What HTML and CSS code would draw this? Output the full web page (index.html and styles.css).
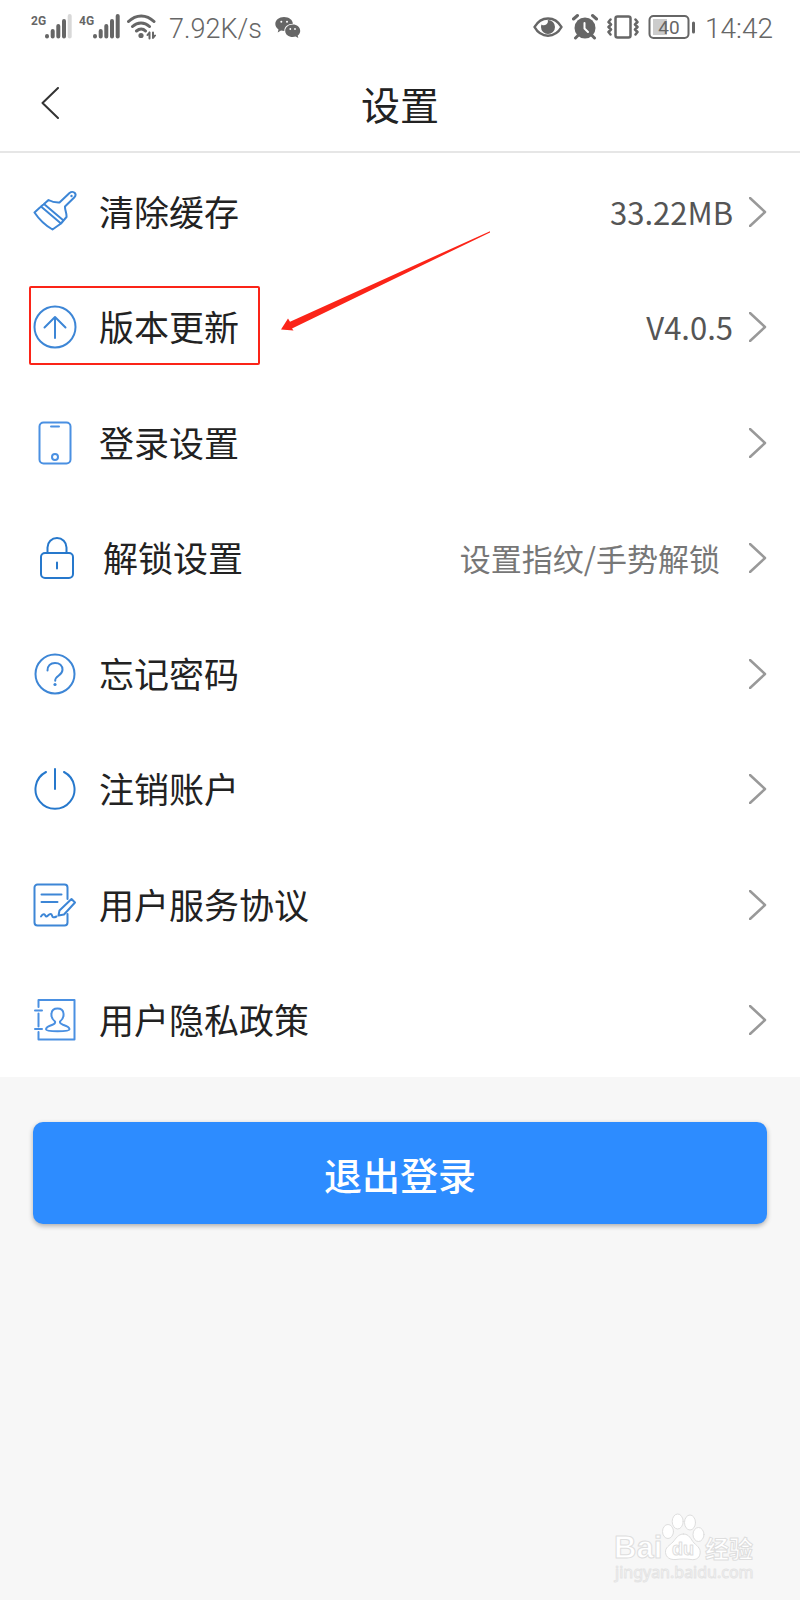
FILE: index.html
```html
<!DOCTYPE html>
<html lang="zh-CN">
<head>
<meta charset="utf-8">
<meta name="viewport" content="width=device-width, initial-scale=1">
<title>设置</title>
<link rel="stylesheet" href="styles.css">
</head>
<body>
<svg class="defs" aria-hidden="true">
  <symbol id="bars" viewBox="0 0 27 28">
    <path d="M2 23v.4M7.7 18v5.4M13.3 13v10.4M19 8v15.4" />
  </symbol>
  <symbol id="chevron" viewBox="0 0 18 30">
    <path d="M1 1l15 14L1 29" />
  </symbol>
</svg>

<div class="status">
  <div class="status-group">
    <svg class="signal" viewBox="0 0 41 28"><text x="0" y="12">2G</text><use href="#bars" x="14" width="27" height="28"/><path class="faint" d="M38.7 3v20.4"/></svg>
    <svg class="signal" viewBox="0 0 41 28"><text x="0" y="12">4G</text><use href="#bars" x="14" width="27" height="28"/><path d="M38.7 3v20.4"/></svg>
    <svg class="wifi" viewBox="0 0 29 28">
      <path d="M1.500 8.500C9 1 19.500 1 27 8.500M5.500 13.500c5-4.700 12-4.700 17 0M9.500 18c3-2.600 6.500-2.600 9 0"/>
      <circle cx="14" cy="22.500" r="2.600"/>
      <path class="thin" d="M22.500 19.500v6M20.500 22l2-2.500M26 19.500v5.500l2-2.500"/>
    </svg>
    <span class="speed">7.92K/s</span>
    <svg class="wechat" viewBox="0 0 26 28">
      <path d="M9 4c5 0 8.600 2.800 8.900 6.700-5 0-8.700 2.900-8.600 7.300-1.300 0-2.300-.1-3.300-.4l-3.300 2 .8-3.200C1.500 15 .3 13.100.3 11 .3 7 4 4 9 4z"/>
      <path d="M17.800 11.600c4.200 0 7.400 2.700 7.400 6.300 0 1.900-1 3.500-2.500 4.600l.6 2.500-2.700-1.500c-.9.300-1.800.4-2.800.4-4.200 0-7.600-2.600-7.600-6s3.400-6.300 7.600-6.300z"/>
      <g class="holes"><circle cx="6.300" cy="8.700" r="1"/><circle cx="12" cy="8.700" r="1"/><circle cx="15.300" cy="16" r=".9"/><circle cx="20" cy="16" r=".9"/></g>
    </svg>
  </div>
  <div class="status-group right">
    <svg class="eye" viewBox="0 0 30 28">
      <path class="line" d="M1.500 14C8 2.500 22 2.500 28.500 14 22 25.500 8 25.500 1.500 14z"/>
      <path d="M15 7a7 7 0 1 1-7 7c0-1 .2-1.800.5-2.500a4 4 0 0 0 6.200-4.400z"/>
    </svg>
    <svg class="alarm" viewBox="0 0 26 28">
      <circle cx="13" cy="15" r="10.500"/>
      <path class="line" d="M1.500 6l4-3.500M24.500 6l-4-3.500M6 22.500l-2.500 2.500M20 22.500l2.500 2.500"/>
      <path class="hand" d="M12.500 10v5.500l3.500 3.500"/>
    </svg>
    <svg class="vibrate" viewBox="0 0 32 28">
      <rect x="8.500" y="3.500" width="15" height="21" rx="2"/>
      <path d="M3.500 6.500L1.500 9l2.500 2.500L1.500 14 4 16.500 1.500 19l2 2.500M28.500 6.500l2 2.500-2.500 2.500 2.500 2.500-2.500 2.500 2.500 2.500-2 2.500"/>
    </svg>
    <svg class="battery" viewBox="0 0 48 28">
      <rect class="charge" x="5" y="6" width="14" height="16"/>
      <rect class="shell" x="1.500" y="3" width="39" height="22" rx="4"/>
      <path class="cap" d="M45.500 10v9"/>
      <text x="21" y="21">40</text>
    </svg>
    <time class="clock">14:42</time>
  </div>
</div>

<header class="header">
  <button class="back" aria-label="返回"><svg viewBox="0 0 18 32"><path d="M17 1L1.500 16 17 31"/></svg></button>
  <h1>设置</h1>
</header>

<main>
  <nav class="list">
    <a class="row" href="#">
      <svg class="icon" viewBox="0 0 44 44"><path d="M1.500 22.500l6.500-6L28 33.500l-8.500 6c-7-4-13-9.500-18-17zM8 16.500l3-2.500L30.500 30.500 28 33.500M11 14l4.500-4c3 1.700 7 2.700 11 2.500L36.500 3c1.800-1.500 4.200-1.300 5.300 0s.9 3-.6 4.500L32 16.500c-.2 4 2 7 1.500 10.500l-3 3.500"/><circle class="dot" cx="38.500" cy="6" r="1.200"/></svg>
      <span class="label">清除缓存</span><span class="value">33.22MB</span>
      <svg class="chevron"><use href="#chevron"/></svg>
    </a>
    <a class="row marked" href="#">
      <svg class="icon" viewBox="0 0 44 44"><circle cx="22" cy="22" r="20.500"/><path d="M22 33V12.500M11.500 22.500L22 12l10.500 10.500"/></svg>
      <span class="label">版本更新</span><span class="value">V4.0.5</span>
      <svg class="chevron"><use href="#chevron"/></svg>
      <span class="frame"></span>
      <svg class="arrow" viewBox="0 0 210 100"><path d="M0 98.500l7-11 2 3.200L209 .2v1.200L11 97.500l1.500 2z"/></svg>
    </a>
    <a class="row" href="#">
      <svg class="icon light" viewBox="0 0 44 44"><rect x="6.500" y="1.500" width="31" height="41" rx="4"/><path d="M18 5.500h8"/><circle cx="22" cy="36" r="3"/></svg>
      <span class="label">登录设置</span>
      <svg class="chevron"><use href="#chevron"/></svg>
    </a>
    <a class="row lock" href="#">
      <svg class="icon deep" viewBox="0 0 44 44"><rect x="6" y="17" width="32" height="25" rx="4"/><path d="M12.500 17v-5.500a9.500 9.500 0 0 1 19 0V17M22 26.500v6"/></svg>
      <span class="label">解锁设置</span><span class="value hint">设置指纹/手势解锁</span>
      <svg class="chevron"><use href="#chevron"/></svg>
    </a>
    <a class="row" href="#">
      <svg class="icon" viewBox="0 0 44 44"><circle cx="22" cy="22" r="19.500"/><path d="M14.500 18.500c0-4.500 3-7.500 7.500-7.500s7.500 2.700 7.500 6.800c0 3-1.700 4.400-4 6-2.200 1.500-3.300 2.500-3.300 5"/><circle class="dot" cx="22" cy="32.500" r="1.600"/></svg>
      <span class="label">忘记密码</span>
      <svg class="chevron"><use href="#chevron"/></svg>
    </a>
    <a class="row" href="#">
      <svg class="icon deep" viewBox="0 0 44 44"><path d="M13 5A19.500 19.500 0 1 0 31 5M22 2v20"/></svg>
      <span class="label">注销账户</span>
      <svg class="chevron"><use href="#chevron"/></svg>
    </a>
    <a class="row" href="#">
      <svg class="icon" viewBox="0 0 44 44"><path d="M34.500 16V4.500a3 3 0 0 0-3-3h-27a3 3 0 0 0-3 3v35a3 3 0 0 0 3 3h27a3 3 0 0 0 3-3V31M8.500 11.500h20M8.500 19h16M8 33.500c1.500-2 3-3 4-1.500s1 2.500 3 .5 3.500-2 4 0 1.500 2.500 4.500 1M26.500 27.500L38.500 16l3.500 3.500L31 31.500l-5.500 1z"/></svg>
      <span class="label">用户服务协议</span>
      <svg class="chevron"><use href="#chevron"/></svg>
    </a>
    <a class="row" href="#">
      <svg class="icon light" viewBox="0 0 44 44"><path d="M5.500 9V2h36v39.500h-36V34M5.500 15.500v13M2 12.500h7M2 31h7M22 23.500c-3-2.300-4-4.500-3.500-8 .3-3 2.500-5 6-5s5.700 2 6 5c.4 3.500-.5 5.700-3.500 8-.4 1.500.5 2.300 3 3.200 4 1.300 6.500 2.500 6.500 4.500 0 1.400-5 2-12 2s-11.500-.6-11.500-2c0-2 2.500-3.200 6.500-4.500 2.300-.8 3-1.700 2.500-3.200z"/></svg>
      <span class="label">用户隐私政策</span>
      <svg class="chevron"><use href="#chevron"/></svg>
    </a>
  </nav>
  <div class="actions"><button class="logout">退出登录</button></div>
</main>

<svg class="watermark" viewBox="0 0 150 75" role="img" aria-label="Baidu 经验">
  <g class="mark">
    <ellipse cx="58" cy="21.500" rx="5.500" ry="7"/><ellipse cx="67.700" cy="11.500" rx="5.500" ry="7.500"/><ellipse cx="80" cy="12.500" rx="5.500" ry="7.500"/><ellipse cx="88.500" cy="24.500" rx="5.500" ry="7"/>
    <path d="M73.500 24c6 0 7 5 10.500 9 4 3.500 7 6 6 11-1 5-5 6-9 5.500-5-.7-10-.7-15 0-6 .5-10-2-10.500-7s4-7 7.500-10.500c3-3.500 5-8 10.500-8z"/>
    <text class="bai" x="4" y="48">Bai</text>
    <text class="du" x="62" y="45">du</text>
    <text class="exp" x="95" y="48">经验</text>
    <text class="url" x="5" y="68">jingyan.baidu.com</text>
  </g>
</svg>
</body>
</html>
```
FILE: styles.css
```css
* {
  box-sizing: border-box;
}

body {
  position: relative;
  min-height: 100vh;
  margin: 0;
  background: #f7f7f7;
  color: #222;
  font-family: "Noto Sans CJK SC", sans-serif;
}

svg {
  flex: none;
  fill: none;
  stroke-linecap: round;
  stroke-linejoin: round;
}

.defs {
  position: absolute;
  width: 0;
  height: 0;
}

/* Status bar */
.status {
  display: flex;
  justify-content: space-between;
  align-items: center;
  height: 54px;
  padding: 0 27px 0 31px;
  background: #fff;
  color: #666;
  font-family: Roboto, sans-serif;
}

.status-group {
  display: flex;
  align-items: center;
  gap: 7px;
}

.status-group.right {
  gap: 9px;
}

.status svg {
  height: 28px;
  stroke: #666;
}

.signal {
  width: 41px;
  stroke-width: 4;
}

.signal text {
  fill: #666;
  stroke: none;
  font-size: 12px;
  font-weight: 700;
}

.signal .faint {
  stroke: #d8d8d8;
}

.wifi {
  width: 29px;
  stroke-width: 3;
}

.wifi circle {
  fill: #666;
  stroke: none;
}

.wifi .thin {
  stroke-width: 2;
}

.speed,
.clock {
  padding-top: 3px;
  font-size: 27px;
  font-weight: 300;
  line-height: 32px;
}

.speed {
  margin: 0 6px;
}

.clock {
  font-size: 28px;
}

.status .wechat {
  width: 26px;
  fill: #666;
  stroke: none;
}

.wechat .holes {
  fill: #fff;
}

.status .eye {
  width: 30px;
  fill: #666;
  stroke: none;
}

.eye .line {
  fill: none;
  stroke: #666;
  stroke-width: 2.5;
}

.alarm {
  width: 26px;
  fill: #666;
  stroke-width: 3;
}

.alarm circle {
  stroke: none;
}

.alarm .hand {
  fill: none;
  stroke: #fff;
  stroke-width: 2;
}

.vibrate {
  width: 32px;
  stroke-width: 2.5;
}

.battery {
  width: 48px;
  stroke-width: 2;
}

.battery .charge {
  fill: #ccc;
  stroke: none;
}

.battery .cap {
  stroke-width: 3;
}

.battery text {
  fill: #666;
  stroke: none;
  font-size: 19px;
  text-anchor: middle;
}

/* Title bar */
.header {
  display: grid;
  grid-template-columns: 1fr auto 1fr;
  align-items: center;
  height: 99px;
  padding: 0 33px;
  border-bottom: 2px solid #e6e6e6;
  background: #fff;
}

.header h1 {
  margin: 0;
  font-size: 39px;
  font-weight: 400;
  line-height: 56px;
}

.back {
  justify-self: start;
  display: flex;
  padding: 8px;
  border: 0;
  background: none;
}

.back svg {
  width: 18px;
  height: 32px;
  stroke: #333;
  stroke-width: 2;
}

/* Settings rows */
.list {
  background: #fff;
}

.row {
  position: relative;
  display: flex;
  align-items: center;
  height: 115px;
  padding: 2px 33px 0;
  color: inherit;
  text-decoration: none;
}

.row:nth-child(even) {
  height: 116px;
}

.row.lock {
  padding-left: 35px;
}

.icon {
  width: 44px;
  height: 44px;
  margin-right: 22px;
  stroke: #3d86d6;
  stroke-width: 2;
}

.icon.deep {
  stroke: #2678cc;
}

.icon.light {
  stroke: #4a90e2;
}

.icon .dot {
  fill: #3d86d6;
  stroke: none;
}

.label {
  padding-bottom: 2px;
  font-size: 35px;
  line-height: 52px;
}

.lock .label {
  padding-left: 2px;
}

.value {
  margin-left: auto;
  color: #555;
  font-size: 31px;
  line-height: 46px;
}

.hint {
  margin-right: 13px;
  color: #777;
}

.chevron {
  width: 18px;
  height: 30px;
  margin-left: auto;
  stroke: #999;
  stroke-width: 2.5;
}

.value + .chevron {
  margin-left: 16px;
}

/* Callout drawn over the update row */
.frame {
  position: absolute;
  top: 18px;
  left: 29px;
  width: 231px;
  height: 79px;
  border: 2px solid #fb2418;
  border-radius: 2px;
}

.arrow {
  position: absolute;
  top: -37px;
  left: 281px;
  width: 210px;
  height: 100px;
  fill: #fb2418;
}

/* Log out */
.actions {
  padding: 45px 33px;
}

.logout {
  display: block;
  width: 100%;
  padding: 24px 0 22px;
  border: 0;
  border-radius: 10px;
  background: #2d8cff;
  box-shadow: 0 2px 5px rgba(0, 0, 0, 0.3);
  color: #fff;
  font: 500 38px/56px "Noto Sans CJK SC", sans-serif;
}

/* Watermark */
.watermark {
  position: absolute;
  right: 40px;
  bottom: 15px;
  width: 150px;
  height: 75px;
}

.mark {
  fill: #fff;
  stroke: #dedede;
  stroke-width: 1;
}

.mark text {
  font-family: "Liberation Sans", "Noto Sans CJK SC", sans-serif;
  font-weight: 700;
}

.mark .bai {
  font-size: 31px;
}

.mark .du {
  font-size: 18px;
}

.mark .exp {
  font-size: 24px;
}

.mark .url {
  stroke: #e4e4e4;
  font-family: "Noto Sans", sans-serif;
  font-size: 16px;
  font-weight: 400;
}
```
